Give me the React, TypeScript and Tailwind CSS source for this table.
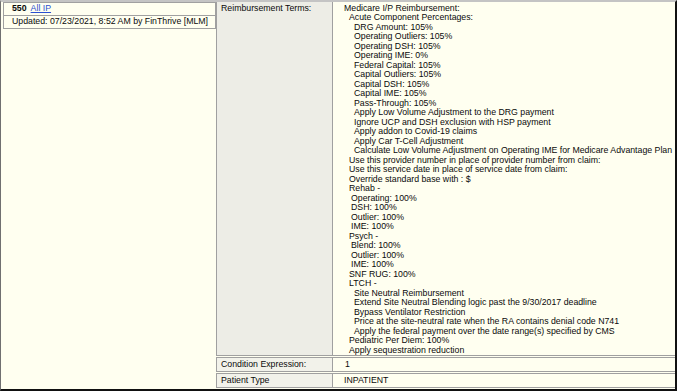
import React from "react"

const terms: [number, string][] = [
    [0, "Medicare I/P Reimbursement:"],
    [5, "Acute Component Percentages:"],
    [10, "DRG Amount: 105%"],
    [10, "Operating Outliers: 105%"],
    [10, "Operating DSH: 105%"],
    [10, "Operating IME: 0%"],
    [10, "Federal Capital: 105%"],
    [10, "Capital Outliers: 105%"],
    [10, "Capital DSH: 105%"],
    [10, "Capital IME: 105%"],
    [10, "Pass-Through: 105%"],
    [10, "Apply Low Volume Adjustment to the DRG payment"],
    [10, "Ignore UCP and DSH exclusion with HSP payment"],
    [10, "Apply addon to Covid-19 claims"],
    [10, "Apply Car T-Cell Adjustment"],
    [10, "Calculate Low Volume Adjustment on Operating IME for Medicare Advantage Plan"],
    [5, "Use this provider number in place of provider number from claim:"],
    [5, "Use this service date in place of service date from claim:"],
    [5, "Override standard base with : $"],
    [5, "Rehab -"],
    [7, "Operating: 100%"],
    [7, "DSH: 100%"],
    [7, "Outlier: 100%"],
    [7, "IME: 100%"],
    [5, "Psych -"],
    [7, "Blend: 100%"],
    [7, "Outlier: 100%"],
    [7, "IME: 100%"],
    [5, "SNF RUG: 100%"],
    [5, "LTCH -"],
    [10, "Site Neutral Reimbursement"],
    [10, "Extend Site Neutral Blending logic past the 9/30/2017 deadline"],
    [10, "Bypass Ventilator Restriction"],
    [10, "Price at the site-neutral rate when the RA contains denial code N741"],
    [10, "Apply the federal payment over the date range(s) specified by CMS"],
    [5, "Pediatric Per Diem: 100%"],
    [5, "Apply sequestration reduction"],
]

const indent: Record<number, string> = {
    0: "pl-0",
    5: "pl-[5px]",
    7: "pl-[7px]",
    10: "pl-[10px]",
}

const App = () => {
    return (
        <div className="h-[391px] w-[677px] overflow-hidden bg-white">
            <div
                className="flex h-[391px] w-[677px] border-t-2 border-r-2 border-b-2 border-l border-t-[#c4c4c4] border-r-[#111] border-b-[#111] border-l-[#707070] bg-[#fffff0] text-[8.75px] leading-[9.5px] text-[#0a0a0a]"
                style={{ fontFamily: '"Liberation Sans", Arial, sans-serif' }}
            >
                {/* left: rule header */}
                <div className="w-[215px] shrink-0 pl-[2px]">
                    <div className="flex h-[14px] items-center gap-[4px] border border-[#a0a0a0] pl-[8px]">
                        <span className="font-bold">550</span>
                        <span className="text-[#2b4fd1] underline">All IP</span>
                    </div>
                    <div className="flex h-[13px] items-center border border-t-0 border-[#a0a0a0] pl-[8px]">
                        Updated: 07/23/2021, 8:52 AM by FinThrive [MLM]
                    </div>
                </div>

                {/* right: terms table */}
                <div className="flex flex-1 flex-col gap-[1px]">
                    <div className="flex h-[354px] border-b border-[#a0a0a0]">
                        <div className="w-[116px] shrink-0 border-l border-[#a0a0a0] bg-[#ededE6] pt-[1.5px] pl-[4px]">
                            Reimbursement Terms:
                        </div>
                        <div className="flex-1 border-l border-[#a0a0a0] pt-[1.5px] pl-[11px]">
                            {terms.map(([n, t], i) => (
                                <div key={i} className={"whitespace-nowrap " + indent[n]}>
                                    {t}
                                </div>
                            ))}
                        </div>
                    </div>
                    <div className="flex h-[15px] border-y border-[#a0a0a0]">
                        <div className="flex w-[116px] shrink-0 items-center border-l border-[#a0a0a0] bg-[#f2f2ea] pl-[4px]">
                            Condition Expression:
                        </div>
                        <div className="flex flex-1 items-center border-l border-[#a0a0a0] pl-[12px]">1</div>
                    </div>
                    <div className="flex h-[15px] border-y border-[#a0a0a0]">
                        <div className="flex w-[116px] shrink-0 items-center border-l border-[#a0a0a0] bg-[#f2f2ea] pl-[4px]">
                            Patient Type
                        </div>
                        <div className="flex flex-1 items-center border-l border-[#a0a0a0] pl-[11px]">INPATIENT</div>
                    </div>
                </div>
            </div>
        </div>
    )
}

export default App
